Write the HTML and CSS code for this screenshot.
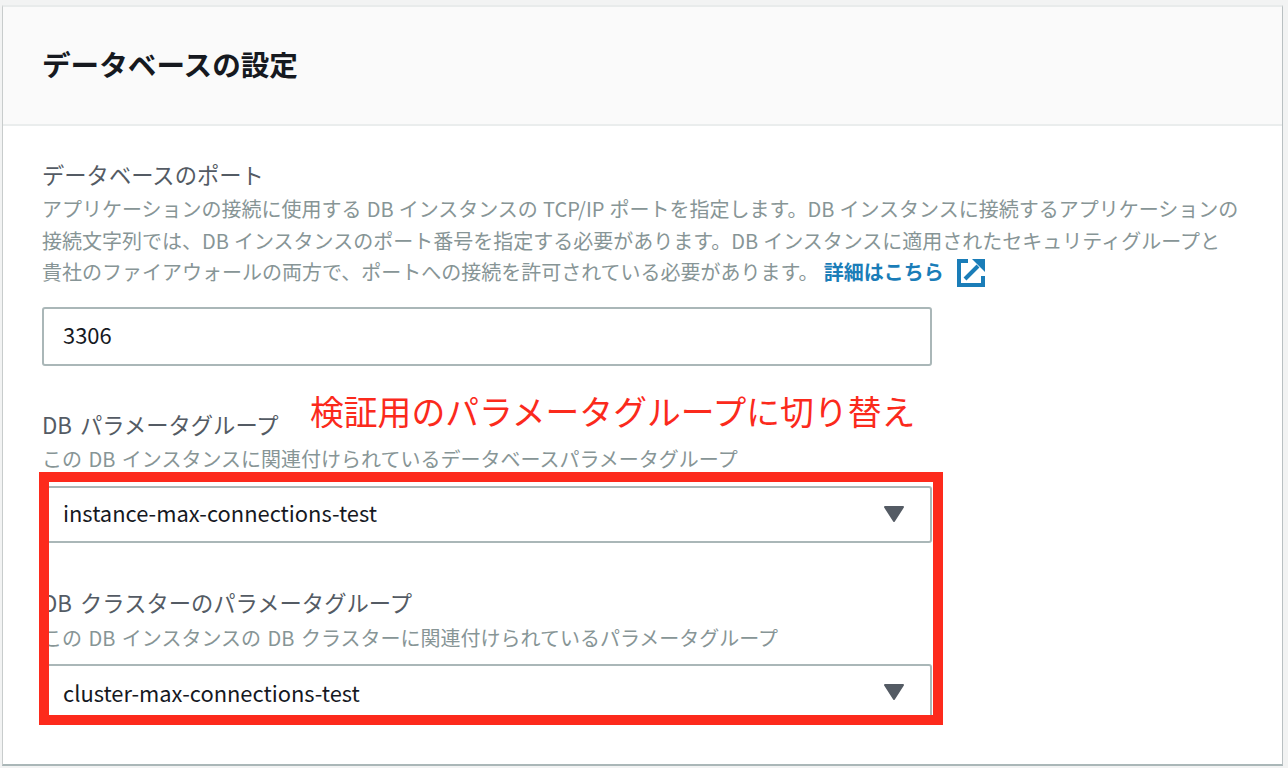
FILE: index.html
```html
<!DOCTYPE html>
<html lang="ja">
<head>
    <meta charset="UTF-8">
    <title>データベースの設定</title>
    <link rel="stylesheet" href="styles.css">
</head>
<body>
    <div class="card">
        <div class="card-header">
            <h2>データベースの設定</h2>
        </div>
        <div class="card-body">
            <div class="form-group group-port">
                <label>データベースのポート</label>
                <p class="desc desc-long">アプリケーションの接続に使用する DB インスタンスの TCP/IP ポートを指定します。DB インスタンスに接続するアプリケーションの<br>接続文字列では、DB インスタンスのポート番号を指定する必要があります。DB インスタンスに適用されたセキュリティグループと<br>貴社のファイアウォールの両方で、ポートへの接続を許可されている必要があります。 <a class="link" href="#">詳細はこちら<svg class="ext-icon" width="28" height="28" viewBox="0 0 28 28"><path d="M11 2H2v24h24v-9" fill="none" stroke="#1a7db8" stroke-width="4"/><path d="M8 20 21 7" fill="none" stroke="#1a7db8" stroke-width="4"/><path d="M15 0h13v13z" fill="#1a7db8"/></svg></a></p>
                <input class="field" type="text" value="3306">
            </div>
            <div class="form-group group-param">
                <label>DB パラメータグループ</label>
                <p class="desc">この DB インスタンスに関連付けられているデータベースパラメータグループ</p>
                <div class="field select">instance-max-connections-test<svg class="arrow" width="20" height="16" viewBox="0 0 20 16"><path d="M1 1h18l-9 14z" fill="#545b64" stroke="#545b64" stroke-width="2" stroke-linejoin="round"/></svg></div>
            </div>
            <div class="form-group group-cluster">
                <label>DB クラスターのパラメータグループ</label>
                <p class="desc">この DB インスタンスの DB クラスターに関連付けられているパラメータグループ</p>
                <div class="field select">cluster-max-connections-test<svg class="arrow" width="20" height="16" viewBox="0 0 20 16"><path d="M1 1h18l-9 14z" fill="#545b64" stroke="#545b64" stroke-width="2" stroke-linejoin="round"/></svg></div>
            </div>
        </div>
        <div class="note">検証用のパラメータグループに切り替え</div>
        <div class="red-box"></div>
    </div>
</body>
</html>
```

FILE: styles.css
```css
* {
    box-sizing: border-box;
}
body {
    margin: 0;
    height: 768px;
    overflow: hidden;
    background-color: #f2f3f3;
    font-family: "Noto Sans CJK JP", "Noto Sans", sans-serif;
    padding: 5px 5px 0 2px;
}
.card {
    position: relative;
    height: 761px;
    background-color: #fff;
    border-top: 2px solid #e8ebeb;
    border-left: 1px solid #c8cccc;
    border-right: 1px solid #b9c0c2;
    border-bottom: 2px solid #aab7b8;
    overflow: hidden;
}
.card-header {
    height: 119px;
    background-color: #fafafa;
    border-bottom: 2px solid #eaeded;
    padding: 34px 0 0 39px;
}
h2 {
    margin: 0;
    font-size: 28.6px;
    line-height: 46px;
    font-weight: 700;
    color: #16191f;
}
.card-body {
    padding: 0 39px;
}
.form-group {
    width: 890px;
}
.group-port {
    padding-top: 30px;
}
.group-param {
    padding-top: 40px;
}
.group-cluster {
    padding-top: 41px;
}
.group-cluster .desc {
    margin-top: 2px;
}
.group-cluster .select {
    margin-top: 10px;
    line-height: 54px;
}
label {
    display: block;
    font-size: 22.3px;
    line-height: 36px;
    word-spacing: 3px;
    color: #545b64;
}
.desc {
    margin: 1px 0 0;
    width: 1210px;
    font-size: 20px;
    line-height: 32px;
    word-spacing: 2px;
    color: #879596;
}
.desc-long {
    line-height: 31.5px;
    word-spacing: 0.6px;
}
.link {
    color: #1a7db8;
    font-weight: 700;
    text-decoration: none;
}
.ext-icon {
    vertical-align: -7px;
    margin-left: 13px;
}
.field {
    display: block;
    width: 890px;
    height: 59px;
    margin-top: 19px;
    padding: 0 19px 3px;
    border: 2px solid #aab7b8;
    border-radius: 3px;
    background-color: #fff;
    font-family: "Noto Sans CJK JP", "Noto Sans", sans-serif;
    font-size: 21.9px;
    color: #16191f;
}
.select {
    position: relative;
    height: 57px;
    padding-bottom: 0;
    line-height: 50px;
    margin-top: 11px;
}
.arrow {
    position: absolute;
    right: 26px;
    top: 18px;
}
.note {
    position: absolute;
    left: 307px;
    top: 380px;
    font-size: 33.8px;
    line-height: 48px;
    white-space: nowrap;
    color: #fb2a1c;
}
.red-box {
    position: absolute;
    left: 36px;
    top: 465px;
    width: 904px;
    height: 253px;
    border: 10px solid #fd2a1c;
}
```
